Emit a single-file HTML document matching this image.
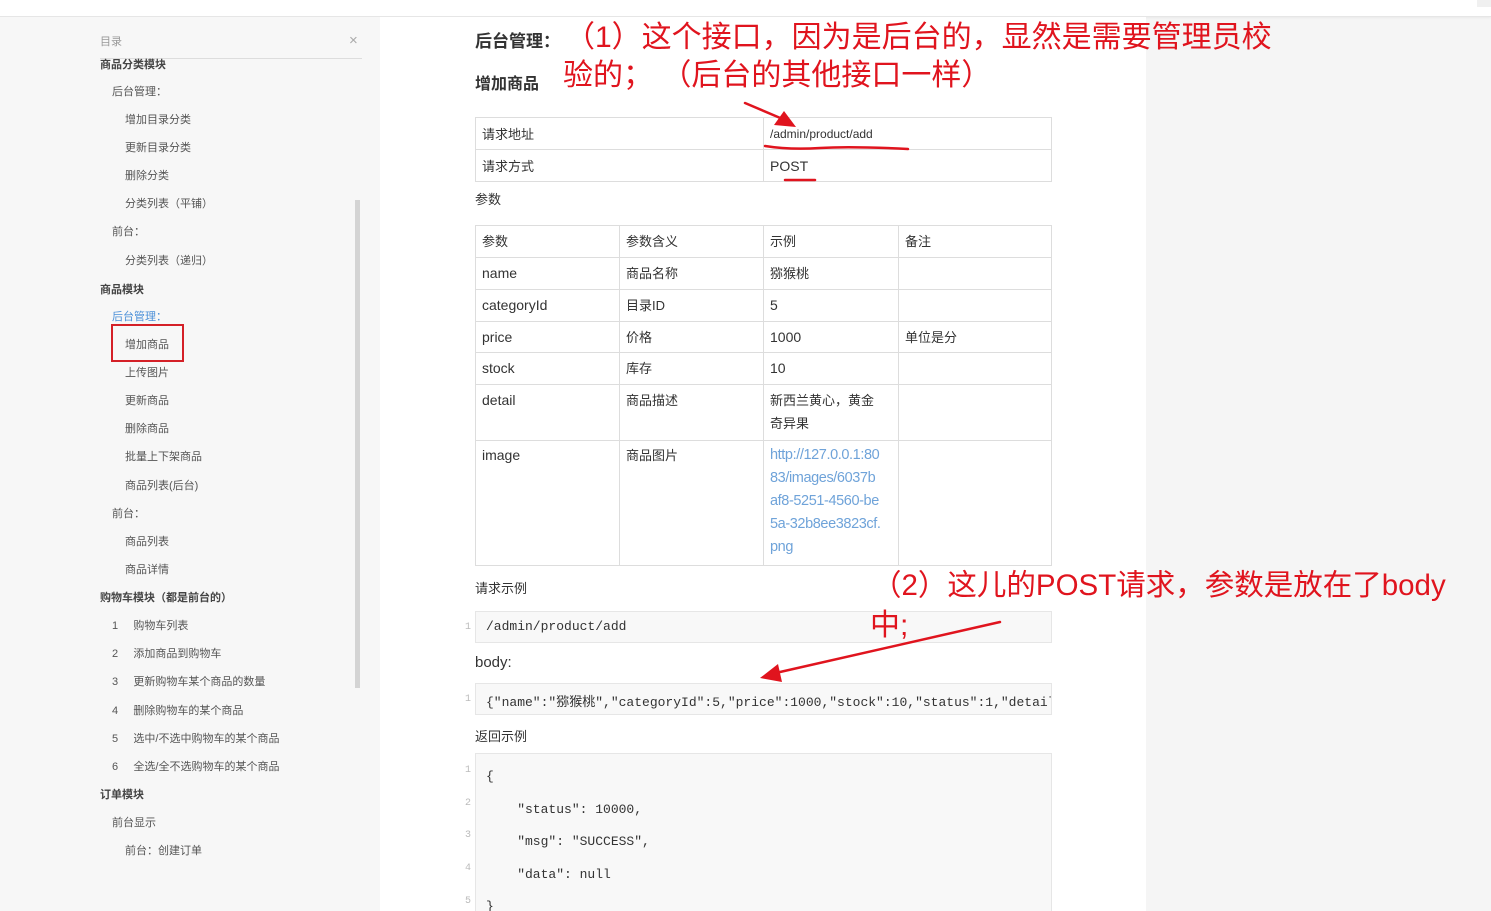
<!DOCTYPE html>
<html style="overflow:hidden;height:911px"><head><meta charset="utf-8"><style>
*{margin:0;padding:0;box-sizing:border-box}
body{width:1491px;height:911px;overflow:hidden;background:#f5f5f5;font-family:"Liberation Sans","Noto Sans CJK SC",sans-serif;position:relative;color:#333}
.a{position:absolute;white-space:nowrap}
#top{position:absolute;left:0;top:0;width:1491px;height:17px;background:#fff;border-bottom:1px solid #e6e6e6;box-shadow:0 1px 2px rgba(0,0,0,.05)}
#side{position:absolute;left:0;top:17px;width:380px;height:894px;background:#f7f7f7}
#main{position:absolute;left:380px;top:17px;width:766px;height:894px;background:#fff}
.s{position:absolute;font-size:11px;color:#555;white-space:nowrap;line-height:14px}
.b{font-weight:bold;color:#444}
table{position:absolute;border-collapse:collapse;font-size:14px;color:#333}
td{border:1px solid #ddd;padding:0 6px;vertical-align:top}
.code{position:absolute;left:475px;width:577px;background:#f8f8f8;border:1px solid #e6e6e6;font-family:"Liberation Mono","Noto Sans CJK SC",monospace;font-size:13px;color:#333;overflow:hidden}
.ln{position:absolute;font-family:"Liberation Mono",monospace;font-size:10px;color:#bbb}
.red{position:absolute;color:#e0141e;font-size:30px;white-space:nowrap;font-family:"Liberation Sans","Noto Sans CJK SC",sans-serif;line-height:34px}
</style></head><body>
<div id="top"></div>
<div id="side"></div>
<div id="main"></div>
<div style="position:absolute;left:1477px;top:0;width:14px;height:7px;background:#f0f0f0"></div>

<!-- sidebar -->
<div class="s" style="left:100px;top:35px;color:#999">目录</div>
<div class="a" style="left:349px;top:32px;font-size:15px;color:#aaa">×</div>
<div style="position:absolute;left:100px;top:58px;width:262px;height:1px;background:#ddd"></div>
<div style="position:absolute;left:355px;top:200px;width:5px;height:488px;background:#d4d4d4"></div>
<div class="s b" style="left:100px;top:58px">商品分类模块</div>
<div class="s" style="left:112px;top:85px">后台管理：</div>
<div class="s" style="left:125px;top:113px">增加目录分类</div>
<div class="s" style="left:125px;top:141px">更新目录分类</div>
<div class="s" style="left:125px;top:169px">删除分类</div>
<div class="s" style="left:125px;top:197px">分类列表（平铺）</div>
<div class="s" style="left:112px;top:225px">前台：</div>
<div class="s" style="left:125px;top:254px">分类列表（递归）</div>
<div class="s b" style="left:100px;top:283px">商品模块</div>
<div class="s" style="left:112px;top:310px;color:#4a8fd8">后台管理：</div>
<div style="position:absolute;left:111px;top:324px;width:73px;height:38px;border:2px solid #d42027"></div>
<div class="s" style="left:125px;top:338px">增加商品</div>
<div class="s" style="left:125px;top:366px">上传图片</div>
<div class="s" style="left:125px;top:394px">更新商品</div>
<div class="s" style="left:125px;top:422px">删除商品</div>
<div class="s" style="left:125px;top:450px">批量上下架商品</div>
<div class="s" style="left:125px;top:479px">商品列表(后台)</div>
<div class="s" style="left:112px;top:507px">前台：</div>
<div class="s" style="left:125px;top:535px">商品列表</div>
<div class="s" style="left:125px;top:563px">商品详情</div>
<div class="s b" style="left:100px;top:591px">购物车模块（都是前台的）</div>
<div class="s" style="left:112px;top:619px">1&nbsp;&nbsp;&nbsp;&nbsp;&nbsp;购物车列表</div>
<div class="s" style="left:112px;top:647px">2&nbsp;&nbsp;&nbsp;&nbsp;&nbsp;添加商品到购物车</div>
<div class="s" style="left:112px;top:675px">3&nbsp;&nbsp;&nbsp;&nbsp;&nbsp;更新购物车某个商品的数量</div>
<div class="s" style="left:112px;top:704px">4&nbsp;&nbsp;&nbsp;&nbsp;&nbsp;删除购物车的某个商品</div>
<div class="s" style="left:112px;top:732px">5&nbsp;&nbsp;&nbsp;&nbsp;&nbsp;选中/不选中购物车的某个商品</div>
<div class="s" style="left:112px;top:760px">6&nbsp;&nbsp;&nbsp;&nbsp;&nbsp;全选/全不选购物车的某个商品</div>
<div class="s b" style="left:100px;top:788px">订单模块</div>
<div class="s" style="left:112px;top:816px">前台显示</div>
<div class="s" style="left:125px;top:844px">前台：创建订单</div>

<!-- main -->
<div class="a" style="left:475px;top:27px;font-size:17px;font-weight:bold;color:#333">后台管理：</div>
<div class="a" style="left:475px;top:70px;font-size:16px;font-weight:bold;color:#333">增加商品</div>

<table style="left:475px;top:117px;width:577px">
<tr style="height:32px"><td style="width:288px;vertical-align:middle;font-size:13px">请求地址</td><td style="vertical-align:middle;font-size:12px">/admin/product/add</td></tr>
<tr style="height:32px"><td style="vertical-align:middle;font-size:13px">请求方式</td><td style="vertical-align:middle;font-size:14px">POST</td></tr>
</table>
<div class="a" style="left:475px;top:189px;font-size:13px">参数</div>

<table style="left:475px;top:225px;width:577px;line-height:23px">
<tr style="height:32px"><td style="width:144px;padding-top:4px;font-size:13px">参数</td><td style="width:144px;padding-top:4px;font-size:13px">参数含义</td><td style="width:135px;padding-top:4px;font-size:13px">示例</td><td style="padding-top:4px;font-size:13px">备注</td></tr>
<tr style="height:32px"><td style="padding-top:4px">name</td><td style="padding-top:4px;font-size:13px">商品名称</td><td style="padding-top:4px;font-size:13px">猕猴桃</td><td></td></tr>
<tr style="height:32px"><td style="padding-top:4px">categoryId</td><td style="padding-top:4px;font-size:13px">目录ID</td><td style="padding-top:4px">5</td><td></td></tr>
<tr style="height:31px"><td style="padding-top:4px">price</td><td style="padding-top:4px;font-size:13px">价格</td><td style="padding-top:4px">1000</td><td style="padding-top:4px;font-size:13px">单位是分</td></tr>
<tr style="height:32px"><td style="padding-top:4px">stock</td><td style="padding-top:4px;font-size:13px">库存</td><td style="padding-top:4px">10</td><td></td></tr>
<tr style="height:56px"><td style="padding-top:4px">detail</td><td style="padding-top:4px;font-size:13px">商品描述</td><td style="padding-top:4px;font-size:13px;white-space:nowrap">新西兰黄心，黄金<br>奇异果</td><td></td></tr>
<tr style="height:125px"><td style="padding-top:3px">image</td><td style="padding-top:3px;font-size:13px">商品图片</td><td style="padding-top:3px;color:#6fa3d9;white-space:nowrap;font-size:14.5px;letter-spacing:-0.4px">http://127.0.0.1:80<br>83/images/6037b<br>af8-5251-4560-be<br>5a-32b8ee3823cf.<br>png</td><td></td></tr>
</table>

<div class="a" style="left:475px;top:578px;font-size:13px">请求示例</div>
<div class="code" style="top:611px;height:32px;padding:7px 10px">/admin/product/add</div>
<div class="ln" style="left:465px;top:622px">1</div>
<div class="a" style="left:475px;top:654px;font-size:15px">body:</div>
<div class="code" style="top:683px;height:32px;padding:7px 10px;white-space:nowrap">{"name":"猕猴桃","categoryId":5,"price":1000,"stock":10,"status":1,"detail":"新西兰"}</div>
<div class="ln" style="left:465px;top:694px">1</div>
<div class="a" style="left:475px;top:726px;font-size:13px">返回示例</div>
<div class="code" style="top:753px;height:170px;padding:7px 10px;line-height:32.5px;white-space:pre">{
    "status": 10000,
    "msg": "SUCCESS",
    "data": null
}</div>
<div class="ln" style="left:465px;top:765px">1</div>
<div class="ln" style="left:465px;top:798px">2</div>
<div class="ln" style="left:465px;top:830px">3</div>
<div class="ln" style="left:465px;top:863px">4</div>
<div class="ln" style="left:465px;top:896px">5</div>

<!-- annotations -->
<div class="red" style="left:565px;top:21px">（1）这个接口，因为是后台的，显然是需要管理员校</div>
<div class="red" style="left:563px;top:59px">验的；&nbsp;（后台的其他接口一样）</div>
<div class="red" style="left:872px;top:569px;font-size:29.5px">（2）这儿的POST请求，参数是放在了body</div>
<div class="red" style="left:870px;top:609px">中;</div>
<svg style="position:absolute;left:0;top:0" width="1491" height="911">
<g stroke="#e0141e" stroke-width="2.5" fill="none" stroke-linecap="round">
<path d="M745 103 L785 120"/>
<path d="M765 146 Q790 150 820 148 T908 149"/>
<path d="M785 180 L815 180"/>
<path d="M1000 622 L780 672"/>
</g>
<polygon points="796,127 774,125 784,111" fill="#e0141e"/>
<polygon points="760,678 778,664 782,682" fill="#e0141e"/>
</svg>
</body></html>
